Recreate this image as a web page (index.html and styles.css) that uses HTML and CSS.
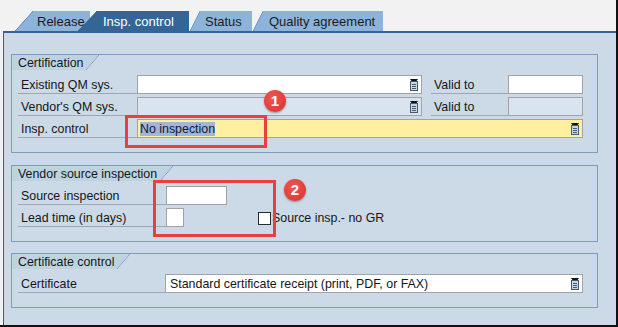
FILE: index.html
```html
<!DOCTYPE html>
<html lang="en">
<head>
    <meta charset="UTF-8">
    <title>Insp. control</title>
    <link rel="stylesheet" href="styles.css">
</head>
<body>
    <div class="frame">
        <div class="tabs">
            <div class="tab tab-release"><span class="slant"></span><span class="tab-text">Release</span></div>
            <div class="tab tab-insp active"><span class="slant"></span><span class="tab-text">Insp. control</span></div>
            <div class="tab tab-status"><span class="slant"></span><span class="tab-text">Status</span></div>
            <div class="tab tab-quality"><span class="slant"></span><span class="tab-text">Quality agreement</span></div>
        </div>

        <div class="panel">
            <div class="group g-cert">
                <div class="group-title"><span>Certification</span><i></i></div>
                <div class="rows">
                    <div class="row">
                        <div class="lbl">Existing QM sys.</div>
                        <div class="field w-qm">
                            <span></span>
                            <svg class="f4" width="10" height="12" viewBox="0 0 10 12"><path d="M1 0H9L7.5 2H2.5Z" fill="#111"/><rect x="1.5" y="2.5" width="7" height="9" fill="#c3d6ea" stroke="#475a72"/><path d="M3 5.5H7M3 7.5H7M3 9.5H7" stroke="#475a72"/></svg>
                        </div>
                        <div class="lbl lbl-valid">Valid to</div>
                        <div class="field w-date"></div>
                    </div>
                    <div class="row">
                        <div class="lbl">Vendor's QM sys.</div>
                        <div class="field w-qm disabled">
                            <span></span>
                            <svg class="f4" width="10" height="12" viewBox="0 0 10 12"><path d="M1 0H9L7.5 2H2.5Z" fill="#111"/><rect x="1.5" y="2.5" width="7" height="9" fill="#c3d6ea" stroke="#475a72"/><path d="M3 5.5H7M3 7.5H7M3 9.5H7" stroke="#475a72"/></svg>
                        </div>
                        <div class="lbl lbl-valid">Valid to</div>
                        <div class="field w-date disabled"></div>
                    </div>
                    <div class="row">
                        <div class="lbl">Insp. control</div>
                        <div class="field w-wide required">
                            <span class="sel">No inspection</span>
                            <svg class="f4" width="10" height="12" viewBox="0 0 10 12"><path d="M1 0H9L7.5 2H2.5Z" fill="#111"/><rect x="1.5" y="2.5" width="7" height="9" fill="#c3d6ea" stroke="#475a72"/><path d="M3 5.5H7M3 7.5H7M3 9.5H7" stroke="#475a72"/></svg>
                        </div>
                    </div>
                </div>
            </div>

            <div class="group g-vendor">
                <div class="group-title"><span>Vendor source inspection</span><i></i></div>
                <div class="rows">
                    <div class="row">
                        <div class="lbl">Source inspection</div>
                        <div class="field w-src"></div>
                    </div>
                    <div class="row">
                        <div class="lbl">Lead time (in days)</div>
                        <div class="field w-lead"></div>
                        <div class="check"></div>
                        <div class="check-text">Source insp.- no GR</div>
                    </div>
                </div>
            </div>

            <div class="group g-certificate">
                <div class="group-title"><span>Certificate control</span><i></i></div>
                <div class="rows">
                    <div class="row">
                        <div class="lbl">Certificate</div>
                        <div class="field w-certificate">
                            <span>Standard certificate receipt (print, PDF, or FAX)</span>
                            <svg class="f4" width="10" height="12" viewBox="0 0 10 12"><path d="M1 0H9L7.5 2H2.5Z" fill="#111"/><rect x="1.5" y="2.5" width="7" height="9" fill="#c3d6ea" stroke="#475a72"/><path d="M3 5.5H7M3 7.5H7M3 9.5H7" stroke="#475a72"/></svg>
                        </div>
                    </div>
                </div>
            </div>
        </div>

        <!-- annotations -->
        <div class="mark mark-1"></div>
        <div class="badge badge-1">1</div>
        <div class="mark mark-2"></div>
        <div class="badge badge-2">2</div>
    </div>
</body>
</html>
```

FILE: styles.css
```css
body {
    margin: 0;
    background: #f2f2f2;
    font-family: "Liberation Sans", Arial, sans-serif;
    font-size: 12.4px;
    color: #161616;
}

.frame {
    position: relative;
    width: 618px;
    height: 327px;
    box-sizing: border-box;
    border-right: 2px solid #111;
    border-bottom: 2px solid #111;
    display: flex;
    flex-direction: column;
}

/* tab strip */
.tabs {
    display: flex;
    height: 20px;
    margin: 11px 0 0 15px;
}

.tab {
    display: flex;
    height: 20px;
    line-height: 21px;
    font-size: 13px;
    color: #1b1b1b;
    position: relative;
}

.tab .slant {
    width: 10px;
    background: linear-gradient(to bottom right, transparent calc(50% - 0.5px), #5f86b3 50%, #8db3db calc(50% + 0.8px));
}

.tab .tab-text {
    box-sizing: border-box;
    background: #8db3db;
    white-space: nowrap;
}

.tab-release .slant { width: 18px; }
.tab-release .tab-text { width: 57px; padding-left: 4px; }

.tab-insp { margin-left: -12px; }
.tab-insp .slant { width: 19px; }
.tab-insp .tab-text { width: 92px; padding-left: 6px; }

.tab-status { margin-left: 1px; }
.tab-status .tab-text { width: 52px; padding-left: 5px; }

.tab-quality { margin-left: 1px; }
.tab-quality .tab-text { width: 120px; padding-left: 6px; }

.tab.active { z-index: 1; color: #fff; }
.tab.active .slant { background: linear-gradient(to bottom right, transparent calc(50% - 0.5px), #346597 50%); }
.tab.active .tab-text { background: #346597; }

/* main panel */
.panel {
    flex: 1;
    margin-left: 3px;
    border-left: 1px solid #3a5f8a;
    border-top: 2px solid #346597;
    background: #ccdae8;
    padding: 21px 18px 0 7px;
}

.group {
    border: 1px solid #7d9cbf;
    margin-bottom: 12px;
}

.g-vendor { margin-bottom: 11px; }

.group-title {
    display: flex;
    height: 15px;
    line-height: 16px;
}

.group-title span {
    background: #bdd4e0;
    padding: 0 3px 0 6px;
}

.group-title i {
    width: 13px;
    background: linear-gradient(to bottom right, #bdd4e0 calc(50% - 0.6px), #7d9cbf 50%, transparent calc(50% + 0.6px));
}

.rows {
    display: flex;
    flex-direction: column;
    gap: 3px;
    padding: 5px 13px 14px 6px;
}

.row {
    display: flex;
    height: 19px;
}

.lbl {
    box-sizing: border-box;
    height: 19px;
    line-height: 20px;
    padding-left: 3px;
    border-bottom: 1px solid #9ea6b0;
    white-space: nowrap;
}

.g-cert .lbl { width: 119px; }
.g-vendor .lbl { width: 148px; }
.g-certificate .lbl { width: 147px; }
.g-cert .lbl-valid { width: 77px; margin-left: 9px; }

.field {
    box-sizing: border-box;
    height: 19px;
    border: 1px solid #a3a3a3;
    background: #fff;
    display: flex;
    align-items: center;
    justify-content: space-between;
    padding: 0 2px 0 2px;
    white-space: nowrap;
}

.field.disabled { background: #d9e4f0; }
.field.required { background: #fef0a0; }

.f4 { display: block; }

.sel {
    background: #a5b6d4;
    color: #0c1a3a;
    line-height: 14px;
}

.w-qm { width: 285px; }
.w-date { width: 75px; }
.w-wide { width: 446px; }
.w-src { width: 61px; }
.w-lead { width: 18px; }
.w-certificate { width: 418px; padding-left: 4px; }

.check {
    box-sizing: border-box;
    width: 13px;
    height: 13px;
    margin: 4px 1px 0 74px;
    border: 1px solid #2b2b2b;
    background: #fff;
}

.check-text {
    line-height: 20px;
}

/* red call-outs */
.mark {
    position: absolute;
    box-sizing: border-box;
    border: 3px solid #e8403e;
}

.mark-1 { left: 125px; top: 115px; width: 142px; height: 33px; }
.mark-2 { left: 153px; top: 180px; width: 123px; height: 57px; }

.badge {
    position: absolute;
    width: 22px;
    height: 22px;
    border-radius: 50%;
    background: radial-gradient(circle at 40% 35%, #f0554f, #d8322f);
    box-shadow: 0 1px 2px rgba(0, 0, 0, 0.35);
    color: #fff;
    font-weight: bold;
    font-size: 15px;
    line-height: 22px;
    text-align: center;
}

.badge-1 { left: 264px; top: 90px; }
.badge-2 { left: 284px; top: 179px; }
```
